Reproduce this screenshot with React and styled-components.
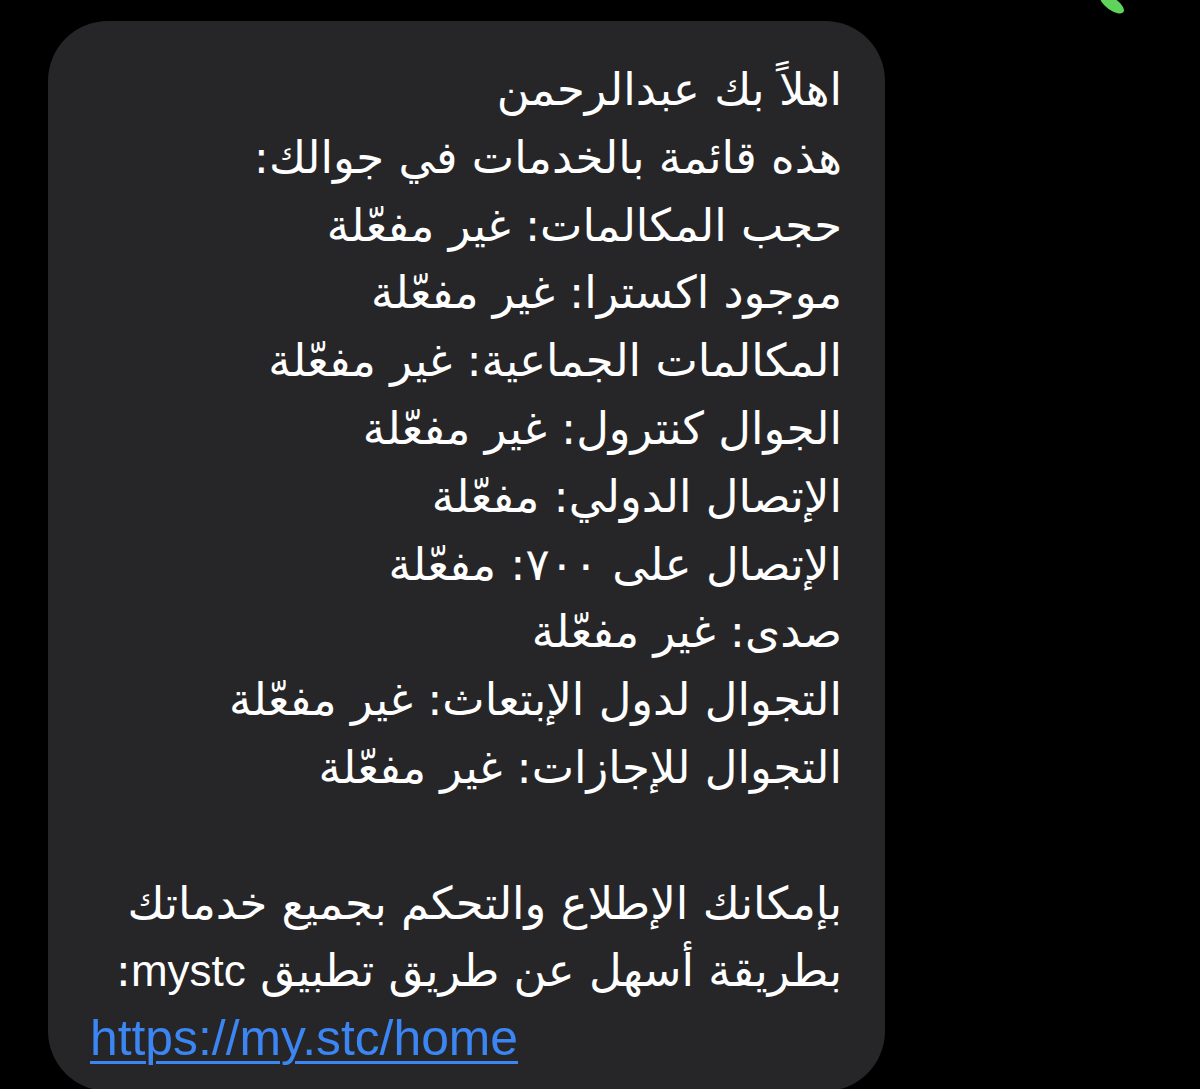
import React from "react"
import styled, { createGlobalStyle } from "styled-components"

const Global = createGlobalStyle`
  html, body {
    margin: 0;
    padding: 0;
    background: #000;
    height: 1089px;
    overflow: hidden;
  }
`;

const Screen = styled.div`
  position: relative;
  width: 1200px;
  height: 1089px;
  background: #000;
  padding-top: 21px;
  box-sizing: border-box;
`;

const GreenTail = styled.svg`
  position: absolute;
  top: -4px;
  left: 1092px;
`;

const Bubble = styled.div`
  margin-left: 48px;
  width: 837px;
  box-sizing: border-box;
  background: #262629;
  border-radius: 60px;
  padding: 35px 43px 18px 42px;
  color: #fff;
  font-family: "DejaVu Sans", sans-serif;
  font-size: 45px;
  line-height: 67.8px;
`;

const Line = styled.div`
  direction: ${p => (p.$ltr ? "ltr" : "rtl")};
  text-align: ${p => (p.$ltr ? "left" : "right")};
  white-space: nowrap;
  height: 67.8px;
`;

const Latin = styled.span`
  font-family: "Liberation Sans", sans-serif;
  font-size: 44px;
`;

const Link = styled.a`
  font-family: "Liberation Sans", sans-serif;
  font-size: 49.8px;
  color: #3b86f2;
  text-decoration: underline;
  text-decoration-thickness: 3px;
  text-underline-offset: 6px;
`;

const lines = [
  "اهلاً بك عبدالرحمن",
  "هذه قائمة بالخدمات في جوالك:",
  "حجب المكالمات: غير مفعّلة",
  "موجود اكسترا: غير مفعّلة",
  "المكالمات الجماعية: غير مفعّلة",
  "الجوال كنترول: غير مفعّلة",
  "الإتصال الدولي: مفعّلة",
  "الإتصال على ٧٠٠: مفعّلة",
  "صدى: غير مفعّلة",
  "التجوال لدول الإبتعاث: غير مفعّلة",
  "التجوال للإجازات: غير مفعّلة",
];

export default function App() {
  return (
    <Screen>
      <Global />
      <GreenTail width="40" height="20" viewBox="0 0 40 20">
        <ellipse cx="20" cy="8" rx="14" ry="6" transform="rotate(35 20 8)" fill="#5fd35c" />
      </GreenTail>
      <Bubble>
        {lines.map((t, i) => (
          <Line key={i}>{t}</Line>
        ))}
        <Line />
        <Line>بإمكانك الإطلاع والتحكم بجميع خدماتك</Line>
        <Line>
          بطريقة أسهل عن طريق تطبيق <Latin>mystc</Latin>:
        </Line>
        <Line $ltr>
          <Link href="#">https://my.stc/home</Link>
        </Line>
      </Bubble>
    </Screen>
  )
}
